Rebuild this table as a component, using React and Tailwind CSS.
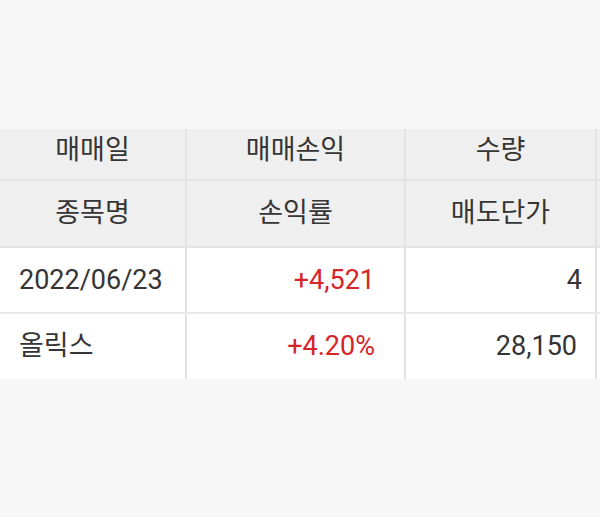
import React from 'react';

const font = { fontFamily: 'Roboto, "Noto Sans CJK KR", sans-serif' };

const Cell = ({ children, className = '' }) => (
    <div className={`flex items-center border-r-2 border-[#e3e3e3] ${className}`}>{children}</div>
);

const App = () => {
    return (
        <div className="w-[600px] h-[517px] bg-[#f7f7f7] overflow-hidden text-[#353535]" style={font}>
            <div className="h-[129px]" />
            <div className="w-[800px] text-[27px]">
                <div className="flex h-[52px] bg-[#efefef] border-b-2 border-[#e3e3e3]">
                    <Cell className="w-[187px] justify-center pb-[8px]">매매일</Cell>
                    <Cell className="w-[219px] justify-center pb-[8px]">매매손익</Cell>
                    <Cell className="w-[191px] justify-center pb-[8px]">수량</Cell>
                    <div className="flex-1" />
                </div>
                <div className="flex h-[67px] bg-[#efefef] border-b-2 border-[#e3e3e3]">
                    <Cell className="w-[187px] justify-center">종목명</Cell>
                    <Cell className="w-[219px] justify-center">손익률</Cell>
                    <Cell className="w-[191px] justify-center">매도단가</Cell>
                    <div className="flex-1" />
                </div>
                <div className="flex h-[66px] bg-white border-b-2 border-[#e8e8e8]">
                    <Cell className="w-[187px] pl-[19px]">2022/06/23</Cell>
                    <Cell className="w-[219px] justify-end pr-[29px] text-[#d62429]">+4,521</Cell>
                    <Cell className="w-[191px] justify-end pr-[13px]">4</Cell>
                    <div className="flex-1" />
                </div>
                <div className="flex h-[65px] bg-white">
                    <Cell className="w-[187px] pl-[19px]">올릭스</Cell>
                    <Cell className="w-[219px] justify-end pr-[29px] text-[#d62429]">+4.20%</Cell>
                    <Cell className="w-[191px] justify-end pr-[18px]">28,150</Cell>
                    <div className="flex-1" />
                </div>
            </div>
        </div>
    );
};

export default App;
